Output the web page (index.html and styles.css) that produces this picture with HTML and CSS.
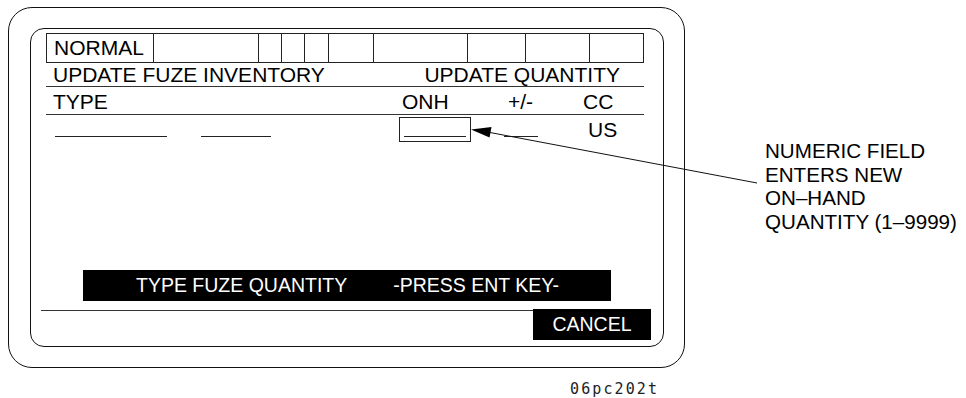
FILE: index.html
```html
<!DOCTYPE html>
<html lang="en">

<head>
  <meta charset="UTF-8">
  <meta name="viewport" content="width=device-width, initial-scale=1.0">
  <title>Update Fuze Inventory</title>
  <link rel="stylesheet" href="styles.css">
</head>

<body>
  <div class="sheet">
    <div class="frame">
      <div class="screen">
        <div class="status">
          <div class="cell c1">NORMAL</div>
          <div class="cell c2"></div>
          <div class="cell c3"></div>
          <div class="cell c4"></div>
          <div class="cell c5"></div>
          <div class="cell c6"></div>
          <div class="cell c7"></div>
          <div class="cell c8"></div>
          <div class="cell c9"></div>
          <div class="cell c10"></div>
        </div>
        <div class="row title">
          <span>UPDATE FUZE INVENTORY</span>
          <span>UPDATE QUANTITY</span>
        </div>
        <div class="row heads">
          <span class="h-type">TYPE</span>
          <span class="h-onh">ONH</span>
          <span class="h-adj">+/-</span>
          <span class="h-cc">CC</span>
        </div>
        <div class="data">
          <span class="blank b1"></span>
          <span class="blank b2"></span>
          <span class="field"><span class="field-line"></span></span>
          <span class="blank b3"></span>
          <span class="cc">US</span>
        </div>
        <div class="prompt">
          <span>TYPE FUZE QUANTITY</span>
          <span class="key">-PRESS ENT KEY-</span>
        </div>
        <div class="softkeys">
          <div class="rule"></div>
          <div class="softkey">CANCEL</div>
        </div>
      </div>
    </div>
    <div class="callout">
      NUMERIC FIELD<br>
      ENTERS NEW<br>
      ON&ndash;HAND<br>
      QUANTITY (1&ndash;9999)
    </div>
    <div class="figno">06pc202t</div>
    <svg class="leader" width="966" height="398" viewBox="0 0 966 398">
      <line x1="490" y1="132.5" x2="757" y2="183" stroke="#111" stroke-width="1" />
      <polygon points="471,129.5 491.5,127 489.5,137.5" fill="#000" />
    </svg>
  </div>
</body>

</html>
```

FILE: styles.css
```css
body {
  margin: 0;
  background: #fff;
  color: #000;
  font-family: "Liberation Sans", Arial, sans-serif;
}

.sheet {
  position: relative;
  display: grid;
  grid-template-columns: 677px auto;
  grid-template-rows: 361px auto;
  width: 966px;
  height: 398px;
  padding: 7px 0 0 8px;
  box-sizing: border-box;
}

.frame {
  box-sizing: border-box;
  width: 677px;
  height: 361px;
  border: 1px solid #111;
  border-radius: 24px;
  padding: 20px 0 0 21px;
}

.screen {
  box-sizing: border-box;
  width: 634px;
  height: 319px;
  border: 1px solid #111;
  border-radius: 14px;
  display: flex;
  flex-direction: column;
  font-size: 21px;
}

.status {
  display: flex;
  width: 598px;
  height: 30px;
  box-sizing: border-box;
  margin: 4px 0 0 15px;
  border: 1px solid #222;
}

.cell {
  box-sizing: border-box;
  height: 28px;
  line-height: 28px;
  border-right: 1px solid #222;
  padding-left: 7px;
}

.c1 { width: 107px; }
.c2 { width: 105px; }
.c3 { width: 23px; }
.c4 { width: 23px; }
.c5 { width: 24px; }
.c6 { width: 45px; }
.c7 { width: 94px; }
.c8 { width: 58px; }
.c9 { width: 64px; }
.c10 { width: 53px; border-right: 0; }

.row {
  display: flex;
  width: 598px;
  box-sizing: border-box;
  margin-left: 15px;
  padding-left: 7px;
  border-bottom: 1px solid #333;
}

.title {
  justify-content: space-between;
  padding-top: 1px;
  padding-right: 24px;
  line-height: 22px;
}

.heads {
  padding-top: 3px;
  line-height: 24px;
}

.h-type { width: 349px; }
.h-onh { width: 106px; }
.h-adj { width: 75px; }

.data {
  display: flex;
  align-items: flex-start;
  height: 27px;
  margin-left: 24px;
}

.blank {
  box-sizing: border-box;
  height: 22px;
  border-bottom: 1px solid #222;
}

.b1 { width: 112px; }
.b2 { width: 70px; margin-left: 34px; }
.b3 { width: 34px; margin-left: 33px; }

.field {
  box-sizing: border-box;
  width: 72px;
  height: 25px;
  margin: 2px 0 0 128px;
  padding: 0 4px;
  border: 1px solid #222;
}

.field-line {
  display: block;
  height: 19px;
  box-sizing: border-box;
  border-bottom: 1px solid #222;
}

.cc {
  margin: 3px 0 0 50px;
  line-height: 24px;
}

.prompt {
  display: flex;
  box-sizing: border-box;
  width: 528px;
  height: 31px;
  margin: auto 0 0 52px;
  padding-left: 53px;
  background: #000;
  color: #fff;
  font-size: 19.5px;
  line-height: 31px;
}

.key {
  margin-left: 46px;
}

.softkeys {
  display: flex;
  align-items: flex-start;
  margin: 8px 11px 6px 10px;
}

.rule {
  width: 492px;
  margin-top: 1px;
  border-top: 1px solid #333;
}

.softkey {
  width: 118px;
  height: 31px;
  line-height: 31px;
  background: #000;
  color: #fff;
  text-align: center;
  font-size: 19.5px;
}

.callout {
  margin: 132px 0 0 80px;
  font-size: 20.6px;
  line-height: 23.5px;
  white-space: nowrap;
}

.figno {
  grid-column: 1;
  padding-left: 562px;
  margin-top: 12px;
  font-family: "DejaVu Sans Mono", monospace;
  font-size: 15px;
  letter-spacing: 2.1px;
  line-height: 18px;
  color: #222;
}

.leader {
  position: absolute;
  top: 0;
  left: 0;
  pointer-events: none;
}
```
